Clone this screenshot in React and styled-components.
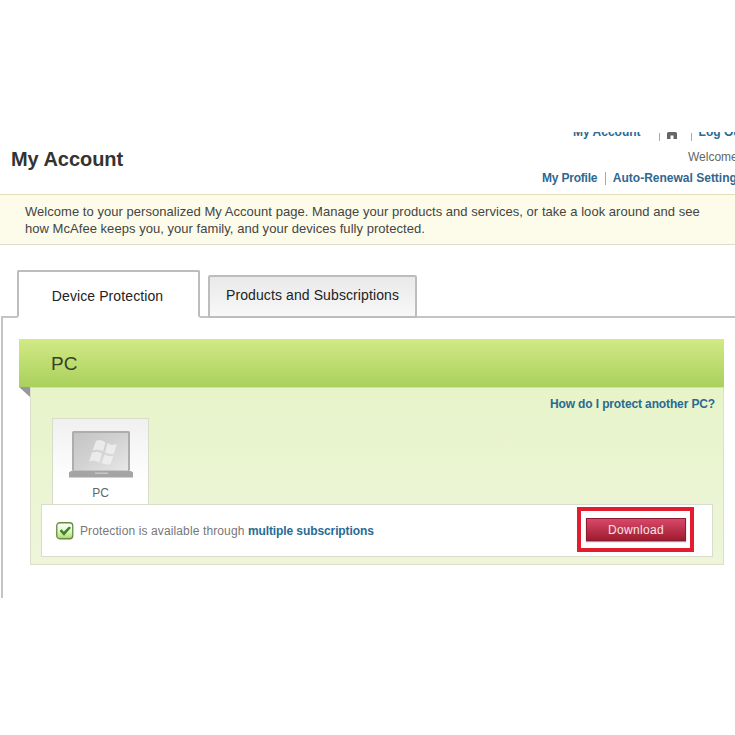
import styled, { createGlobalStyle } from 'styled-components';

const GlobalStyle = createGlobalStyle`
  html, body {
    margin: 0;
    padding: 0;
    background: #fff;
    font-family: "Liberation Sans", Arial, sans-serif;
  }
`;

const LaptopIcon = () => (
  <svg width="66" height="47" viewBox="0 0 66 47">
    <defs>
      <linearGradient id="screen" x1="0" y1="0" x2="1" y2="1">
        <stop offset="0" stopColor="#c4c4c4" />
        <stop offset="0.5" stopColor="#d2d2d2" />
        <stop offset="1" stopColor="#e8e8e8" />
      </linearGradient>
    </defs>
    <rect x="4" y="0" width="58" height="40" rx="1.5" fill="#adadad" />
    <rect x="6" y="2" width="54" height="37.5" fill="url(#screen)" />
    <g fill="#f6f6f6" opacity="0.7">
      <path d="M28 10 C31 8 34 9 37.5 11.5 L35 20.5 C32 18.5 28.5 18 24.5 19.5 Z" />
      <path d="M39.5 12 C42 14 45.5 14.5 49 13 L46 22.5 C42.5 23.5 40 23 37 21.5 Z" />
      <path d="M24 21.5 C28 20 31 20.5 34 22.5 L31.5 31.5 C28.5 29.5 25 29 21 30.5 Z" />
      <path d="M36.5 23.5 C39 25 42 25.5 45.5 24.5 L42.5 33 C39.5 34 36.5 33.5 33.5 32 Z" />
    </g>
    <path d="M3 40 H63 L65 41.5 V46.5 H1 V41.5 Z" fill="#a4a4a4" />
    <rect x="27" y="41.5" width="13" height="1.5" fill="#c8c8c8" />
  </svg>
);

const CheckIcon = () => (
  <svg width="18" height="18" viewBox="0 0 18 18">
    <defs>
      <linearGradient id="checkBg" x1="0" y1="0" x2="0" y2="1">
        <stop offset="0" stopColor="#ffffff" />
        <stop offset="0.55" stopColor="#e6f2c8" />
        <stop offset="1" stopColor="#aed564" />
      </linearGradient>
    </defs>
    <rect x="0.75" y="0.75" width="16" height="16" rx="3" fill="url(#checkBg)" stroke="#5f8f3e" strokeWidth="1.3" />
    <path d="M3.6 9 L5.6 7.2 L7.8 9.8 L13 4.4 L15 5.8 L8 13.8 Z" fill="#35852a" />
  </svg>
);

const HomeIcon = () => (
  <svg width="10" height="10" viewBox="0 0 10 10">
    <path d="M0 4 L5 0 L10 4 V10 H6.5 V6.5 H3.5 V10 H0 Z" fill="#666" />
  </svg>
);

const App = () => {
  return (
    <Page>
      <GlobalStyle />
      <Header>
        <Title>My Account</Title>
        <HeaderRight>
          <TopNav>
            <TopLink>My Account</TopLink>
            <TopSep />
            <HomeSlot><HomeIcon /></HomeSlot>
            <TopSep />
            <TopLink>Log Out</TopLink>
          </TopNav>
          <Greeting>Welcome back</Greeting>
          <SubNav>
            <SubLink>My Profile</SubLink>
            <SubSep />
            <SubLink>Auto-Renewal Settings</SubLink>
          </SubNav>
        </HeaderRight>
      </Header>

      <Notice>
        Welcome to your personalized My Account page. Manage your products and services, or take a look around and see
        <br />
        how McAfee keeps you, your family, and your devices fully protected.
      </Notice>

      <Tabs>
        <Tab active>Device Protection</Tab>
        <Tab>Products and Subscriptions</Tab>
      </Tabs>

      <Panel>
        <GreenHeader>PC</GreenHeader>
        <GreenBody>
          <Fold />
          <HelpRow>
            <HelpLink>How do I protect another PC?</HelpLink>
          </HelpRow>
          <DeviceTab>
            <LaptopIcon />
            <DeviceLabel>PC</DeviceLabel>
          </DeviceTab>
          <StatusRow>
            <StatusText>
              <CheckIcon />
              <span>
                Protection is available through <StatusLink>multiple subscriptions</StatusLink>
              </span>
            </StatusText>
            <Highlight>
              <DownloadButton>Download</DownloadButton>
            </Highlight>
          </StatusRow>
        </GreenBody>
      </Panel>
    </Page>
  );
};

const Page = styled.div`
  width: 735px;
  height: 735px;
  overflow: hidden;
  padding-top: 132px;
  box-sizing: border-box;
`;

const Header = styled.header`
  display: flex;
  justify-content: space-between;
  height: 62px;
  overflow: hidden;
`;

const Title = styled.h1`
  margin: 15px 0 0 11px;
  font-size: 20px;
  line-height: 24px;
  font-weight: bold;
  letter-spacing: -0.05px;
  color: #333;
`;

const HeaderRight = styled.div`
  width: 193px;
  flex: none;
  display: flex;
  flex-direction: column;
  white-space: nowrap;
`;

const TopNav = styled.div`
  display: flex;
  align-items: center;
  height: 14px;
  margin: -7px 0 0 31px;
`;

const TopLink = styled.span`
  flex: none;
  font-size: 12px;
  font-weight: bold;
  color: #2a6a94;
`;

const TopSep = styled.span`
  flex: none;
  align-self: flex-start;
  width: 1px;
  height: 8px;
  background: #aaa;
  margin: 8px 7px 0 18px;
  &:nth-child(4) {
    margin: 8px 7px 0 14px;
  }
`;

const HomeSlot = styled.span`
  flex: none;
  display: flex;
  margin-top: 3px;
`;

const Greeting = styled.div`
  margin: 11px 0 0 146px;
  font-size: 12px;
  line-height: 14px;
  color: #666;
`;

const SubNav = styled.div`
  display: flex;
  align-items: center;
  margin-top: 7px;
`;

const SubLink = styled.span`
  flex: none;
  font-size: 12px;
  line-height: 14px;
  font-weight: bold;
  letter-spacing: -0.2px;
  color: #2f6790;
  &:last-child {
    letter-spacing: 0;
  }
`;

const SubSep = styled.span`
  flex: none;
  width: 1px;
  height: 13px;
  background: #aaa;
  margin: 0 6.5px 0 8px;
`;

const Notice = styled.div`
  height: 51px;
  box-sizing: border-box;
  padding: 8px 0 0 25px;
  background: #fdfcea;
  border-top: 1px solid #e4ddb8;
  border-bottom: 1px solid #dfdccb;
  font-size: 13px;
  line-height: 17px;
  letter-spacing: 0.04px;
  color: #444;
  white-space: nowrap;
`;

const Tabs = styled.div`
  display: flex;
  align-items: flex-end;
  gap: 8px;
  height: 73px;
  padding-left: 17px;
  margin-bottom: -2px;
  position: relative;
  z-index: 1;
`;

const Tab = styled.div`
  box-sizing: border-box;
  display: flex;
  align-items: center;
  justify-content: center;
  font-size: 14px;
  letter-spacing: 0.1px;
  color: #222;
  border: 2px solid #bdbdbd;
  border-radius: 2px 2px 0 0;
  width: ${({ active }) => (active ? '183px' : '209px')};
  height: ${({ active }) => (active ? '48px' : '43px')};
  padding-top: ${({ active }) => (active ? '4px' : '0')};
  padding-right: ${({ active }) => (active ? '2px' : '0')};
  padding-bottom: ${({ active }) => (active ? '0' : '3px')};
  background: ${({ active }) => (active ? '#fff' : 'linear-gradient(#e9e9e9, #f8f8f8)')};
  border-bottom: ${({ active }) => (active ? '2px solid #fff' : '2px solid #bdbdbd')};
`;

const Panel = styled.div`
  box-sizing: border-box;
  height: 282px;
  margin-left: 1px;
  border-left: 2px solid #c4c4c4;
  border-top: 2px solid #c4c4c4;
  padding: 21px 11px 0 16px;
  background: #fff;
`;

const GreenHeader = styled.div`
  height: 48px;
  box-sizing: border-box;
  padding: 13px 0 0 32px;
  font-size: 19px;
  line-height: 24px;
  color: #3a3f2c;
  background: linear-gradient(#d2ea85, #a9d05c);
`;

const GreenBody = styled.div`
  position: relative;
  box-sizing: border-box;
  height: 178px;
  margin-left: 11px;
  padding: 10px 0 0 10px;
  background: linear-gradient(#e7f4ca, #eef5da);
  border: 1px solid #dcdfcc;
  border-top: 1px solid #d5dcc0;
`;

const Fold = styled.span`
  position: absolute;
  left: -12px;
  top: -1px;
  width: 0;
  height: 0;
  border-top: 10px solid #98989c;
  border-left: 11px solid transparent;
`;

const HelpRow = styled.div`
  display: flex;
  justify-content: flex-end;
  padding-right: 8px;
  height: 20px;
`;

const HelpLink = styled.span`
  font-size: 12px;
  line-height: 12px;
  font-weight: bold;
  letter-spacing: -0.13px;
  color: #2a6a8e;
`;

const DeviceTab = styled.div`
  box-sizing: border-box;
  display: flex;
  flex-direction: column;
  align-items: center;
  width: 97px;
  height: 87px;
  margin-left: 11px;
  padding-top: 12px;
  background: linear-gradient(#f0f0f0, #ffffff 75%);
  border: 1px solid #d9dccb;
  border-bottom: none;
`;

const DeviceLabel = styled.span`
  margin-top: 8px;
  font-size: 12px;
  line-height: 14px;
  color: #666;
`;

const StatusRow = styled.div`
  box-sizing: border-box;
  display: flex;
  align-items: center;
  justify-content: space-between;
  width: 672px;
  height: 53px;
  padding: 0 18px 0 14px;
  background: #fff;
  border: 1px solid #d9dccb;
  margin-top: -1px;
  position: relative;
`;

const StatusText = styled.div`
  display: flex;
  align-items: center;
  gap: 6px;
  font-size: 12px;
  letter-spacing: 0.12px;
  color: #777;
`;

const StatusLink = styled.span`
  font-weight: bold;
  letter-spacing: -0.1px;
  color: #2a6a94;
`;

const Highlight = styled.div`
  box-sizing: border-box;
  display: flex;
  align-items: center;
  justify-content: center;
  width: 117px;
  height: 45px;
  margin-top: -2px;
  padding-left: 1px;
  border: 4px solid #e11d2e;
`;

const DownloadButton = styled.button`
  box-sizing: border-box;
  width: 100px;
  height: 23px;
  padding: 0;
  font-family: inherit;
  font-size: 12px;
  letter-spacing: 0.3px;
  color: #f4e6e8;
  background: linear-gradient(#d8486a, #a01c30);
  border: 1px solid #8c1c30;
  box-shadow: 0 1px 1px #999;
`;

export default App;
